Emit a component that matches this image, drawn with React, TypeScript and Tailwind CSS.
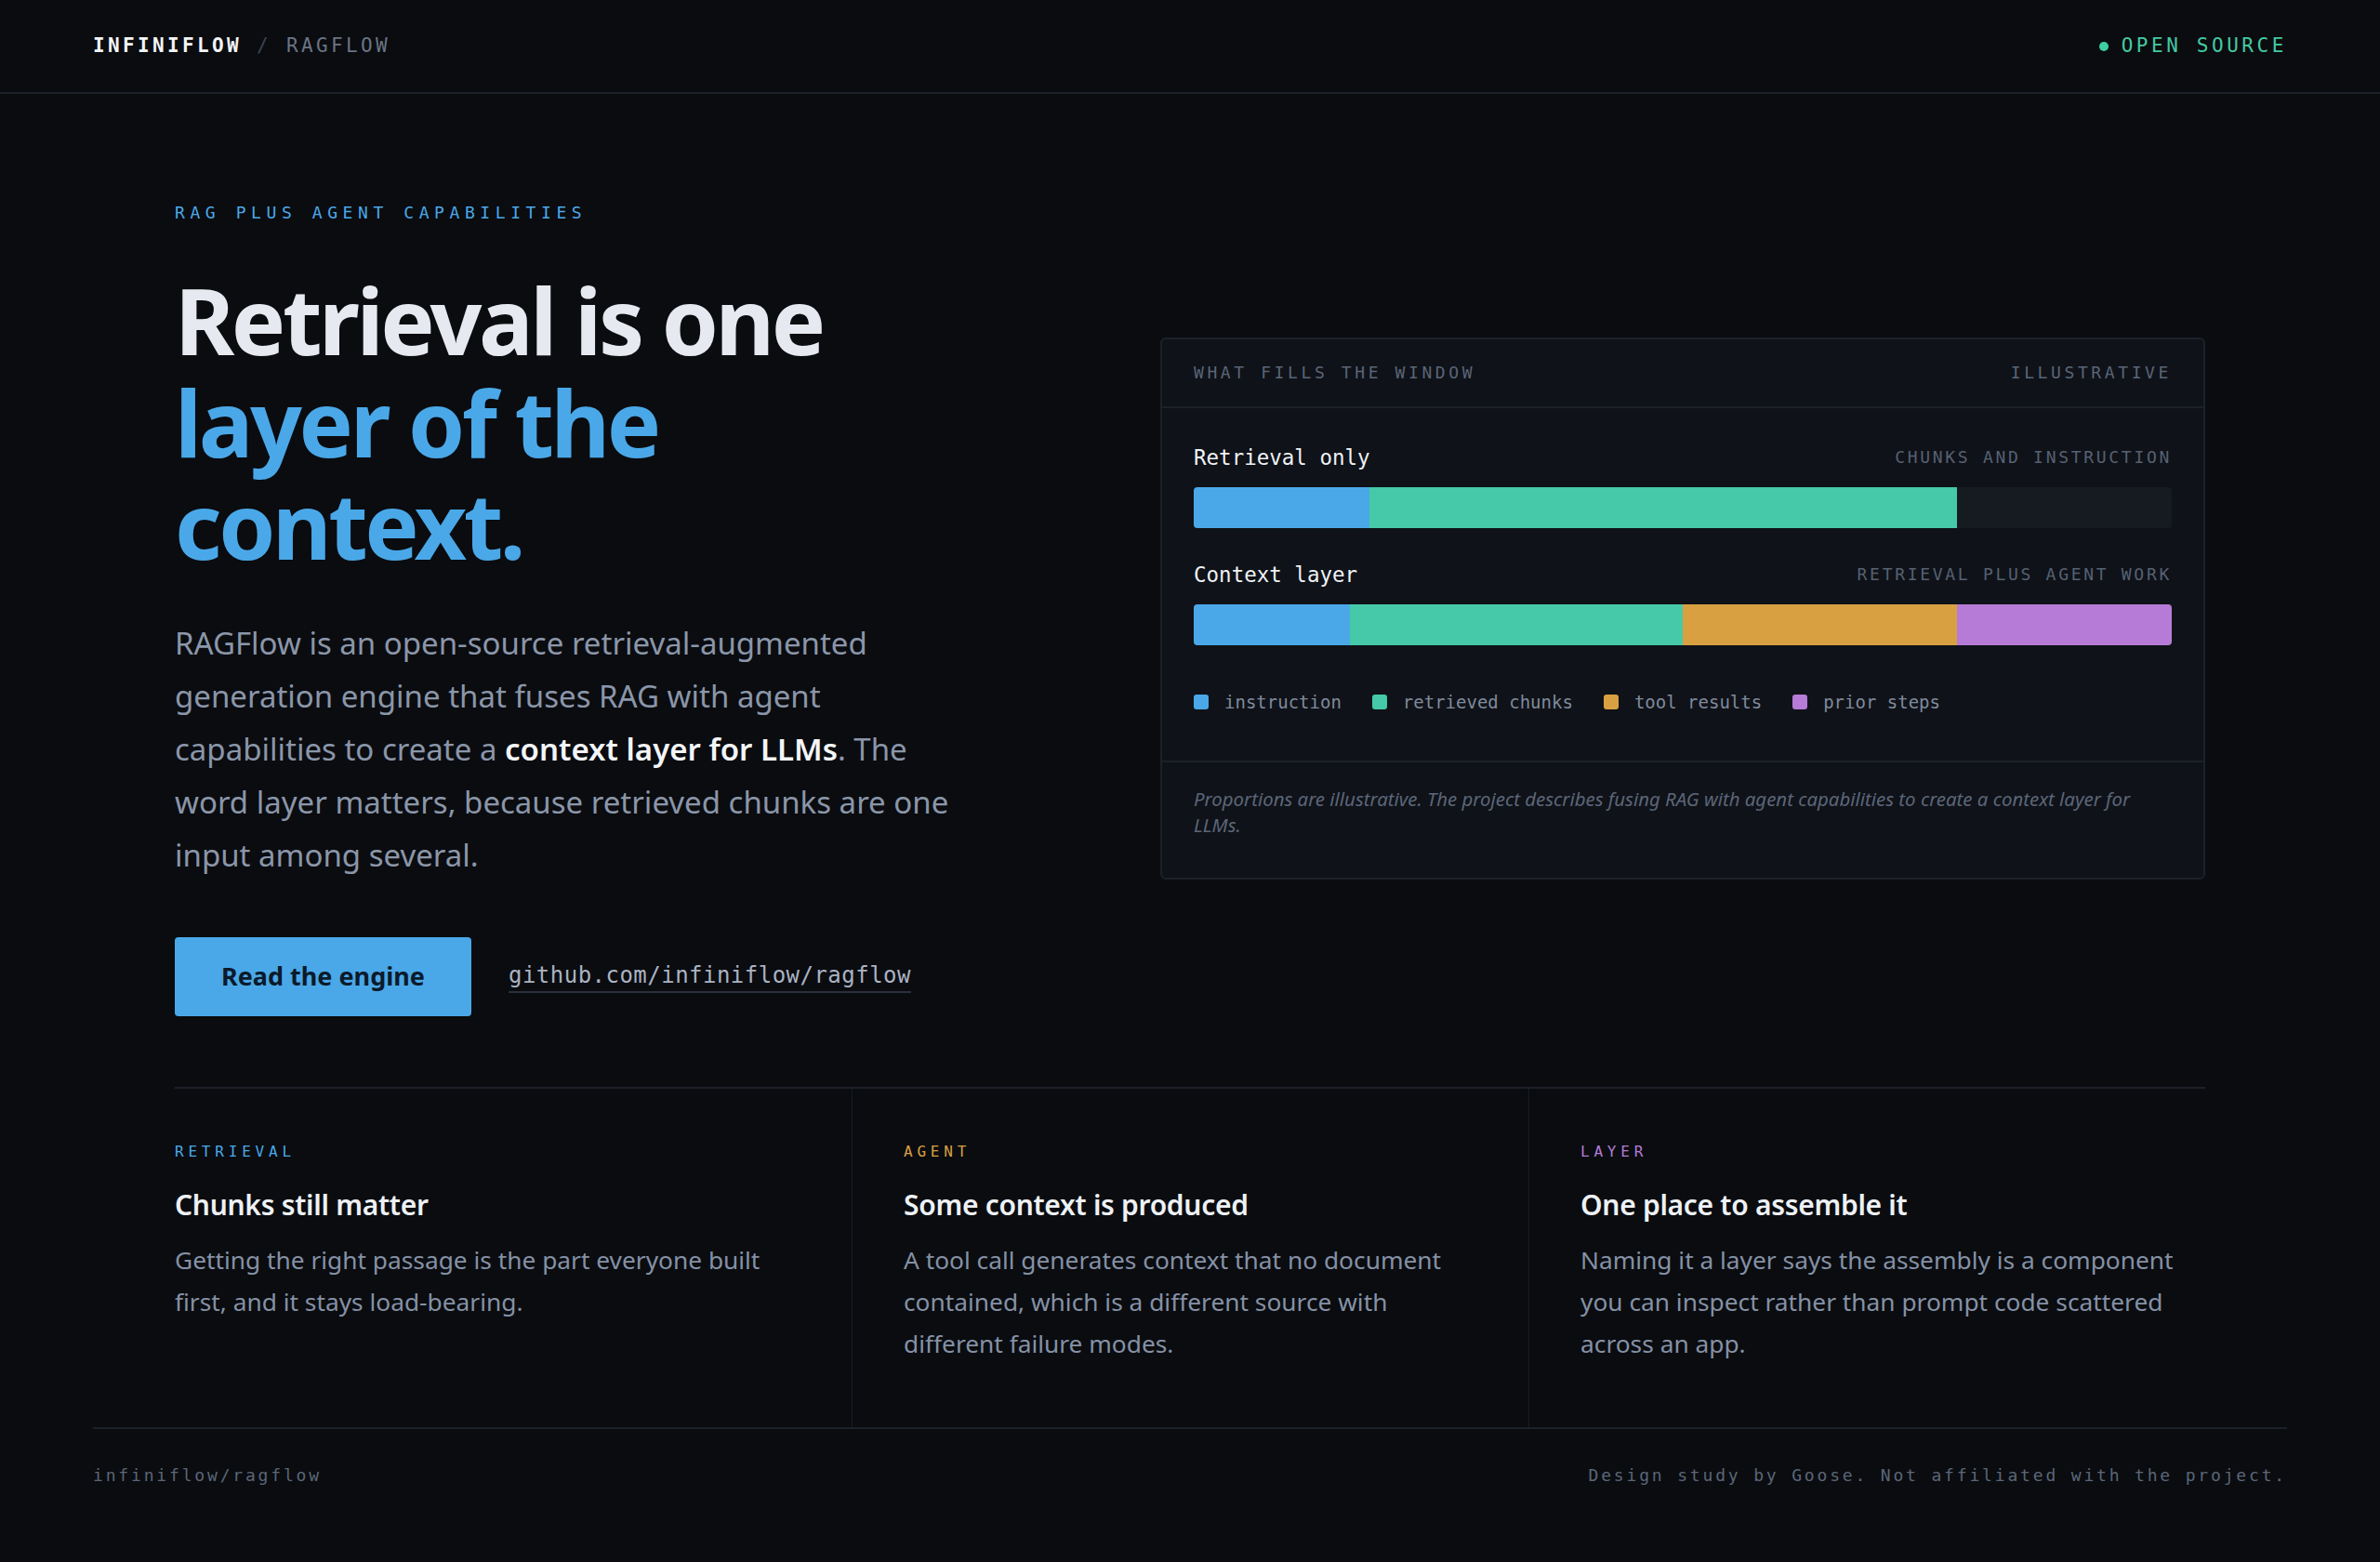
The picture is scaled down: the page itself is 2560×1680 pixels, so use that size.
import React from "react";

const MONO = "[font-family:'DejaVu_Sans_Mono',monospace]";

type Seg = { cls: string };

function BarRow({
  label,
  note,
  segs,
  className,
}: {
  label: string;
  note: string;
  segs: Seg[];
  className?: string;
}) {
  return (
    <div className={className}>
      <div className="flex items-center justify-between">
        <span className={`${MONO} text-[22.5px] leading-[30px] text-[#eef1f5]`}>{label}</span>
        <span className={`${MONO} text-[18px] leading-[30px] tracking-[0.15em] text-[#566173]`}>{note}</span>
      </div>
      <div className="mt-[17px] h-[44px] rounded-[4px] overflow-hidden flex bg-[#161a21]">
        {segs.map((s, i) => (
          <div key={i} className={`h-full ${s.cls}`} />
        ))}
      </div>
    </div>
  );
}

function Legend() {
  const items = [
    { c: "bg-[#4aa8e8]", t: "instruction" },
    { c: "bg-[#45c9a8]", t: "retrieved chunks" },
    { c: "bg-[#d9a042]", t: "tool results" },
    { c: "bg-[#b57bd6]", t: "prior steps" },
  ];
  return (
    <div className="mt-[48px] flex items-center gap-[33px]">
      {items.map((it) => (
        <div key={it.t} className="flex items-center gap-[17px]">
          <span className={`w-[16px] h-[16px] rounded-[3px] ${it.c}`} />
          <span className={`${MONO} text-[19px] leading-[26px] text-[#7f8a9c]`}>{it.t}</span>
        </div>
      ))}
    </div>
  );
}

function Card() {
  return (
    <div className="w-[1124px] rounded-[6px] border-2 border-[#1c2129] bg-[#0f1218]">
      <div
        className={`h-[74px] px-[34px] flex items-center justify-between border-b-2 border-[#1c2129] ${MONO} text-[18px] tracking-[0.2em] text-[#5a6577]`}
      >
        <span>WHAT FILLS THE WINDOW</span>
        <span>ILLUSTRATIVE</span>
      </div>
      <div className="px-[34px] pt-[38px] pb-[50px]">
        <BarRow
          label="Retrieval only"
          note="CHUNKS AND INSTRUCTION"
          segs={[{ cls: "w-[18%] bg-[#4aa8e8]" }, { cls: "w-[60%] bg-[#45c9a8]" }]}
        />
        <BarRow
          className="mt-[35px]"
          label="Context layer"
          note="RETRIEVAL PLUS AGENT WORK"
          segs={[
            { cls: "w-[16%] bg-[#4aa8e8]" },
            { cls: "w-[34%] bg-[#45c9a8]" },
            { cls: "w-[28%] bg-[#d9a042]" },
            { cls: "w-[22%] bg-[#b57bd6]" },
          ]}
        />
        <Legend />
      </div>
      <div className="border-t-2 border-[#1c2129] px-[34px] pt-[25px] pb-[43px]">
        <p className="max-w-[1030px] text-[20.4px] leading-[28px] italic text-[#5c6679]">
          Proportions are illustrative. The project describes fusing RAG with agent capabilities to create a context
          layer for LLMs.
        </p>
      </div>
    </div>
  );
}

const cols = [
  {
    tag: "RETRIEVAL",
    tagCls: "text-[#4aa8e8]",
    title: "Chunks still matter",
    body: "Getting the right passage is the part everyone built first, and it stays load-bearing.",
    wrap: "pr-[56px]",
  },
  {
    tag: "AGENT",
    tagCls: "text-[#d9a042]",
    title: "Some context is produced",
    body: "A tool call generates context that no document contained, which is a different source with different failure modes.",
    wrap: "px-[55px] border-l border-[#171b22]",
  },
  {
    tag: "LAYER",
    tagCls: "text-[#b57bd6]",
    title: "One place to assemble it",
    body: "Naming it a layer says the assembly is a component you can inspect rather than prompt code scattered across an app.",
    wrap: "pl-[55px] border-l border-[#171b22]",
  },
];

export default function App() {
  return (
    <div className="min-h-screen bg-[#0a0c10] [font-family:'Noto_Sans',sans-serif] text-[#e6e9ef]">
      <header className="h-[101px] border-b-2 border-[#1c2129] px-[100px] flex items-center justify-between">
        <div className={`${MONO} text-[21px] tracking-[0.16em] whitespace-pre`}>
          <span className="font-bold text-[#f2f4f7]">INFINIFLOW</span>
          <span className="text-[#3b4350]"> / </span>
          <span className="text-[#6b7484]">RAGFLOW</span>
        </div>
        <div className="flex items-center gap-[14px]">
          <span className="w-[10px] h-[10px] rounded-full bg-[#3fcf9f]" />
          <span className={`${MONO} text-[21px] tracking-[0.17em] text-[#45c9a2]`}>OPEN SOURCE</span>
        </div>
      </header>

      <main className="w-[2184px] mx-auto">
        <section className="pt-[114px] pb-[76px] flex items-center justify-between">
          <div className="w-[860px]">
            <div className={`${MONO} text-[18px] leading-[27px] tracking-[0.31em] text-[#4aa8e8]`}>
              RAG PLUS AGENT CAPABILITIES
            </div>
            <h1 className="mt-[47px] text-[98px] leading-[110px] font-bold tracking-[-0.035em] text-[#e6e9ef]">
              Retrieval is one
              <br />
              <span className="text-[#4aa8e8]">
                layer of the
                <br />
                context.
              </span>
            </h1>
            <p className="mt-[44px] max-w-[845px] text-[33px] leading-[57px] text-[#8b96a9]">
              RAGFlow is an open-source retrieval-augmented generation engine that fuses RAG with agent capabilities to
              create a <strong className="font-semibold text-[#f3f5f8]">context layer for LLMs</strong>. The word layer
              matters, because retrieved chunks are one input among several.
            </p>
            <div className="mt-[60px] flex items-center gap-[40px]">
              <a className="h-[85px] px-[50px] flex items-center rounded-[4px] bg-[#4aa8e8] text-[#0b1a2b] text-[27px] font-bold">
                Read the engine
              </a>
              <a
                className={`${MONO} text-[24px] leading-[32px] tracking-[0.02em] text-[#aab3c2] border-b-2 border-[#2a303a] pb-[1px]`}
              >
                github.com/infiniflow/ragflow
              </a>
            </div>
          </div>
          <Card />
        </section>

        <section className="border-t-2 border-[#1c2129] grid grid-cols-3">
          {cols.map((c) => (
            <div key={c.tag} className={`pt-[56px] pb-[67px] ${c.wrap}`}>
              <div className={`${MONO} text-[16px] leading-[24px] tracking-[0.3em] ${c.tagCls}`}>{c.tag}</div>
              <h3 className="mt-[25px] text-[30px] leading-[40px] font-semibold tracking-[-0.01em] text-[#eef1f5]">
                {c.title}
              </h3>
              <p className="mt-[17px] text-[26.3px] leading-[45px] text-[#8591a5]">{c.body}</p>
            </div>
          ))}
        </section>
      </main>

      <footer
        className={`mx-[100px] border-t-2 border-[#1c2129] pt-[36px] pb-[80px] flex justify-between ${MONO} text-[18px] leading-[27px] tracking-[0.157em] text-[#5b6677]`}
      >
        <span>infiniflow/ragflow</span>
        <span>Design study by Goose. Not affiliated with the project.</span>
      </footer>
    </div>
  );
}
